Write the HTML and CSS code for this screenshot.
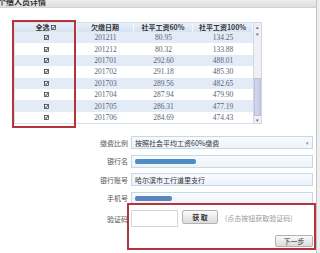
FILE: index.html
```html
<!DOCTYPE html>
<html lang="zh">
<head>
    <meta charset="UTF-8">
    <title>个缴人员详情</title>
    <link rel="stylesheet" href="styles.css">
</head>
<body>
<div class="window">
    <!-- Title bar, cut at the top of the capture -->
    <div class="titlebar"><span>个缴人员详情</span></div>

    <div class="content">
        <!-- Arrears table -->
        <div class="grid-wrap">
            <div class="grid">
                <div class="row head">
                    <div class="cell">全选<svg class="cb" viewBox="0 0 6 6"><rect x="0.5" y="0.5" width="5" height="5"/><path d="M1.3 3 L2.5 4.3 L4.8 1.4"/></svg></div>
                    <div class="cell">欠缴日期</div>
                    <div class="cell">社平工资60%</div>
                    <div class="cell">社平工资100%</div>
                </div>
                <div class="row odd"><div class="cell"><svg class="cb" viewBox="0 0 6 6"><rect x="0.5" y="0.5" width="5" height="5"/><path d="M1.3 3 L2.5 4.3 L4.8 1.4"/></svg></div><div class="cell num">201211</div><div class="cell num">80.95</div><div class="cell num">134.25</div></div>
                <div class="row"><div class="cell"><svg class="cb" viewBox="0 0 6 6"><rect x="0.5" y="0.5" width="5" height="5"/><path d="M1.3 3 L2.5 4.3 L4.8 1.4"/></svg></div><div class="cell num">201212</div><div class="cell num">80.32</div><div class="cell num">133.88</div></div>
                <div class="row odd"><div class="cell"><svg class="cb" viewBox="0 0 6 6"><rect x="0.5" y="0.5" width="5" height="5"/><path d="M1.3 3 L2.5 4.3 L4.8 1.4"/></svg></div><div class="cell num">201701</div><div class="cell num">292.60</div><div class="cell num">488.01</div></div>
                <div class="row"><div class="cell"><svg class="cb" viewBox="0 0 6 6"><rect x="0.5" y="0.5" width="5" height="5"/><path d="M1.3 3 L2.5 4.3 L4.8 1.4"/></svg></div><div class="cell num">201702</div><div class="cell num">291.18</div><div class="cell num">485.30</div></div>
                <div class="row odd"><div class="cell"><svg class="cb" viewBox="0 0 6 6"><rect x="0.5" y="0.5" width="5" height="5"/><path d="M1.3 3 L2.5 4.3 L4.8 1.4"/></svg></div><div class="cell num">201703</div><div class="cell num">289.56</div><div class="cell num">482.65</div></div>
                <div class="row"><div class="cell"><svg class="cb" viewBox="0 0 6 6"><rect x="0.5" y="0.5" width="5" height="5"/><path d="M1.3 3 L2.5 4.3 L4.8 1.4"/></svg></div><div class="cell num">201704</div><div class="cell num">287.94</div><div class="cell num">479.90</div></div>
                <div class="row odd"><div class="cell"><svg class="cb" viewBox="0 0 6 6"><rect x="0.5" y="0.5" width="5" height="5"/><path d="M1.3 3 L2.5 4.3 L4.8 1.4"/></svg></div><div class="cell num">201705</div><div class="cell num">286.31</div><div class="cell num">477.19</div></div>
                <div class="row"><div class="cell"><svg class="cb" viewBox="0 0 6 6"><rect x="0.5" y="0.5" width="5" height="5"/><path d="M1.3 3 L2.5 4.3 L4.8 1.4"/></svg></div><div class="cell num">201706</div><div class="cell num">284.69</div><div class="cell num">474.43</div></div>
            </div>
            <!-- Scrollbar of the table -->
            <div class="scrollbar">
                <div class="sb-btn">▴</div>
                <div class="sb-btn">▾</div>
                <div class="sb-track"><div class="sb-thumb"></div></div>
                <div class="sb-btn">▾</div>
            </div>
            <!-- Red annotation box -->
            <div class="mark mark-table"></div>
        </div>

        <!-- Payment form -->
        <div class="form">
            <div class="fields">
                <label>缴费比例</label>
                <div class="input select">按照社会平均工资60%缴费<span class="arrow">▾</span></div>

                <label>银行名</label>
                <div class="input"><span class="masked masked-bank"></span></div>

                <label>银行账号</label>
                <div class="input">哈尔滨市工行道里支行</div>

                <label>手机号</label>
                <div class="input"><span class="masked masked-phone"></span></div>

                <label>验证码</label>
                <div class="verify">
                    <div class="code-input"></div>
                    <button class="btn">获 取</button>
                    <span class="hint">(点击按钮获取验证码)</span>
                </div>
            </div>
            <div class="actions">
                <button class="btn btn-next">下一步</button>
            </div>
            <!-- Red annotation box -->
            <div class="mark mark-form"></div>
        </div>
    </div>
</div>
</body>
</html>
```

FILE: styles.css
```css
* {
    padding: 0;
    margin: 0;
    box-sizing: border-box;
}

body {
    background: #eeeeee;
    font-family: "Noto Sans CJK SC", "Liberation Sans", sans-serif;
    font-size: 7px;
    color: #444;
    overflow: hidden;
}

.window {
    width: 317px;
    height: 253px;
    background: #ffffff;
    border-right: 1px solid #c4c4c4;
}

.titlebar {
    height: 8px;
    overflow: hidden;
    background: linear-gradient(#ececec, #dedede);
    border-bottom: 1px solid #d2d2d2;
}

.titlebar span {
    display: block;
    margin: -3px 0 0 -2px;
    font-size: 8px;
    font-weight: bold;
    line-height: 10px;
    color: #333;
}

.content {
    padding-top: 14px;
}

/* Table */

.grid-wrap {
    position: relative;
    display: flex;
    margin-left: 14px;
    width: 248px;
}

.grid {
    width: 239px;
    border: 1px solid #d6e0ec;
    border-right: none;
}

.row {
    display: grid;
    grid-template-columns: 62px 57px 59px 60px;
    height: 11.4px;
    align-items: center;
}

.row.head {
    height: 9px;
    background: linear-gradient(#e9f0f9, #d6e2f1);
    color: #333;
    font-weight: bold;
}

.row.head .cell {
    border-right: 1px solid #f4f7fb;
    height: 100%;
    line-height: 9px;
}

.row.odd {
    background: #e3ebf6;
}

.cell {
    display: flex;
    align-items: center;
    justify-content: center;
    gap: 1px;
    white-space: nowrap;
}

.num {
    font-family: "Liberation Serif", serif;
    font-size: 7.5px;
    color: #5a6478;
}

.cb {
    width: 5px;
    height: 5px;
    fill: #ffffff;
    stroke: #333;
    stroke-width: 0.9;
}

.cb path {
    fill: none;
    stroke-width: 1.2;
}

.scrollbar {
    width: 9px;
    display: flex;
    flex-direction: column;
    background: #eef0f5;
    border: 1px solid #d3d8e2;
}

.sb-btn {
    height: 7px;
    font-size: 5px;
    line-height: 7px;
    text-align: center;
    color: #667;
}

.sb-track {
    flex: 1;
    display: flex;
    flex-direction: column;
    justify-content: flex-end;
}

.sb-thumb {
    height: 38px;
    background: linear-gradient(to right, #d4d8ee, #c4c9e6);
    border: 1px solid #b9bfdc;
}

.mark {
    position: absolute;
    border: 2px solid #b5343c;
}

.mark-table {
    left: -2px;
    top: -2px;
    width: 64px;
    height: 108px;
}

/* Form */

.form {
    position: relative;
    margin-top: 12px;
    width: 313px;
    padding-left: 94px;
}

.fields {
    display: grid;
    grid-template-columns: 34px 182px;
    grid-template-rows: 13px 13px 13px 13px 17px;
    column-gap: 3px;
    row-gap: 5.5px;
    align-items: center;
}

label {
    text-align: right;
    white-space: nowrap;
    color: #555;
}

.input {
    position: relative;
    height: 13px;
    display: flex;
    align-items: center;
    padding-left: 3px;
    background: linear-gradient(#f8fbfe, #edf3fa);
    border: 1px solid #c9d6e6;
    color: #333;
    white-space: nowrap;
}

.select .arrow {
    position: absolute;
    right: 3px;
    font-size: 5px;
    color: #888;
}

.masked {
    display: block;
    height: 5px;
    border-radius: 2px;
    background: #4f8cc3;
}

.masked-bank {
    width: 61px;
}

.masked-phone {
    width: 37px;
    background: #5a86bd;
}

.verify {
    display: flex;
    align-items: flex-start;
    height: 17px;
}

.code-input {
    width: 47px;
    height: 17px;
    border: 1px solid #cfd6df;
    background: #ffffff;
}

.btn {
    font-family: "Noto Sans CJK SC", sans-serif;
    font-size: 7px;
    font-weight: bold;
    color: #333;
    background: linear-gradient(#fbfbfb, #dcdcdc);
    border: 1px solid #b2b2b2;
    border-radius: 2px;
}

.verify .btn {
    width: 36px;
    height: 14px;
    margin-left: 4px;
}

.hint {
    margin: 3px 0 0 7px;
    color: #999;
    white-space: nowrap;
}

.actions {
    display: flex;
    justify-content: flex-end;
    margin-top: 8px;
}

.btn-next {
    width: 38px;
    height: 12px;
    font-weight: normal;
}

.mark-form {
    left: 127px;
    top: 67px;
    width: 189px;
    height: 47px;
}
```
